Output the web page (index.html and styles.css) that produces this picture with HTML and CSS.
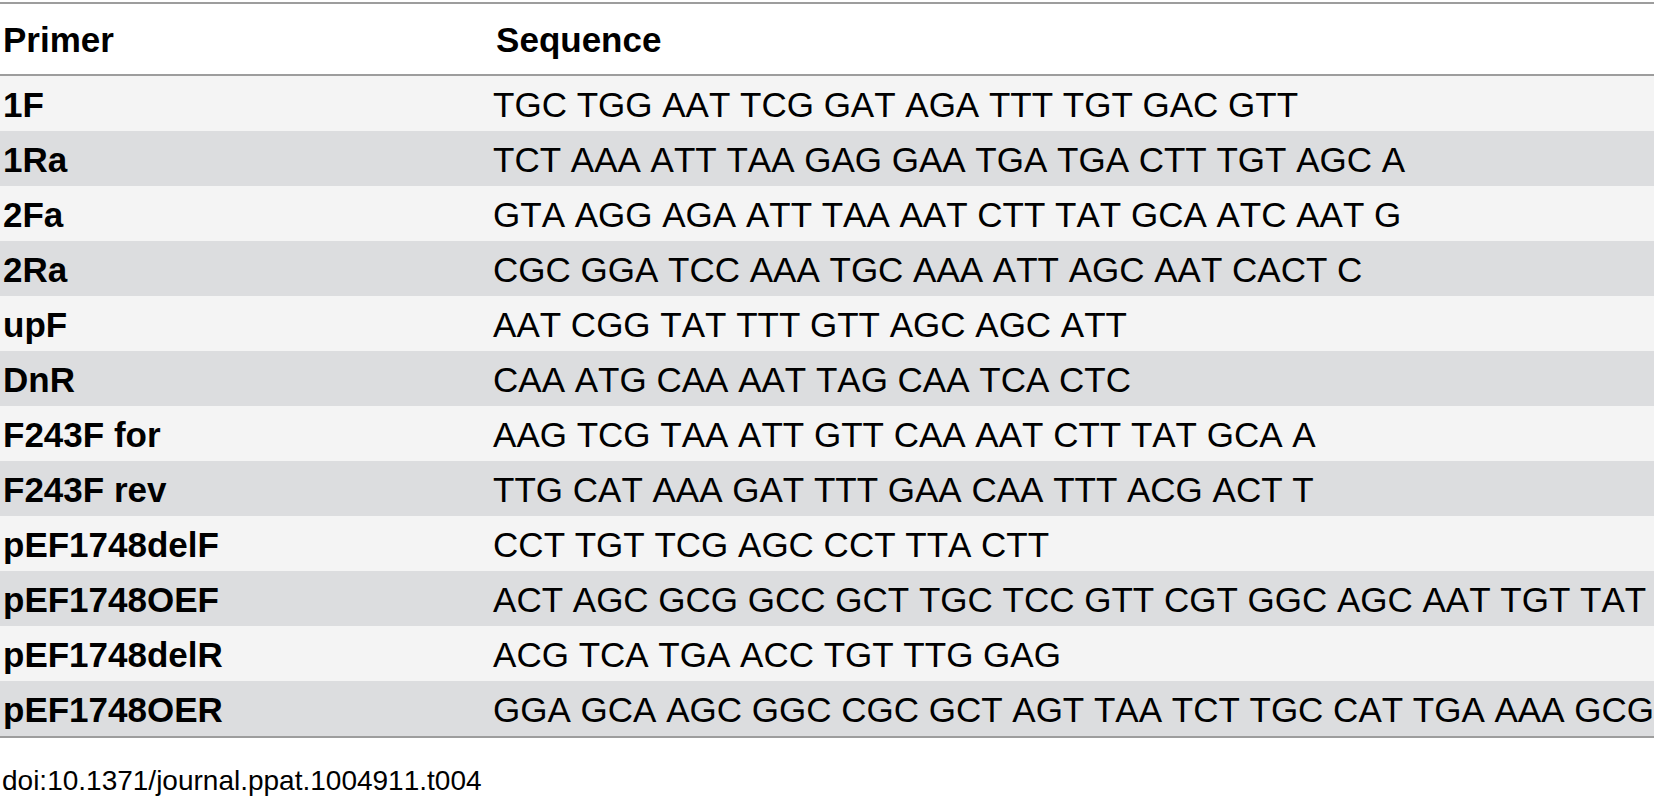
FILE: index.html
```html
<!DOCTYPE html>
<html>
<head>
<meta charset="utf-8">
<link rel="stylesheet" href="styles.css">
</head>
<body>
<div class="page">
<table class="primers">
<thead>
<tr><th class="c1">Primer</th><th class="c2">Sequence</th></tr>
</thead>
<tbody>
<tr><td class="name">1F</td><td>TGC TGG AAT TCG GAT AGA TTT TGT GAC GTT</td></tr>
<tr><td class="name">1Ra</td><td>TCT AAA ATT TAA GAG GAA TGA TGA CTT TGT AGC A</td></tr>
<tr><td class="name">2Fa</td><td>GTA AGG AGA ATT TAA AAT CTT TAT GCA ATC AAT G</td></tr>
<tr><td class="name">2Ra</td><td>CGC GGA TCC AAA TGC AAA ATT AGC AAT CACT C</td></tr>
<tr><td class="name">upF</td><td>AAT CGG TAT TTT GTT AGC AGC ATT</td></tr>
<tr><td class="name">DnR</td><td>CAA ATG CAA AAT TAG CAA TCA CTC</td></tr>
<tr><td class="name">F243F for</td><td>AAG TCG TAA ATT GTT CAA AAT CTT TAT GCA A</td></tr>
<tr><td class="name">F243F rev</td><td>TTG CAT AAA GAT TTT GAA CAA TTT ACG ACT T</td></tr>
<tr><td class="name">pEF1748delF</td><td>CCT TGT TCG AGC CCT TTA CTT</td></tr>
<tr><td class="name">pEF1748OEF</td><td>ACT AGC GCG GCC GCT TGC TCC GTT CGT GGC AGC AAT TGT TAT</td></tr>
<tr><td class="name">pEF1748delR</td><td>ACG TCA TGA ACC TGT TTG GAG</td></tr>
<tr><td class="name">pEF1748OER</td><td>GGA GCA AGC GGC CGC GCT AGT TAA TCT TGC CAT TGA AAA GCG</td></tr>
</tbody>
</table>
<p class="doi">doi:10.1371/journal.ppat.1004911.t004</p>
</div>
</body>
</html>
```
FILE: styles.css
```css
html, body {
  margin: 0;
  padding: 0;
  background: #ffffff;
}
.page {
  padding-top: 2px;
  font-family: "Liberation Sans", Arial, Helvetica, sans-serif;
  font-kerning: none;
  color: #000;
}
.primers {
  border-collapse: separate;
  border-spacing: 0;
  width: 1654px;
  border-top: 2px solid #9d9d9d;
  border-bottom: 2px solid #9d9d9d;
  font-size: 35px;
}
.primers th {
  text-align: left;
  font-weight: bold;
  height: 72px;
  padding: 16px 0 0 3px;
  box-sizing: border-box;
  line-height: 40px;
  vertical-align: top;
  background: #ffffff;
  border-bottom: 2px solid #9d9d9d;
}
.primers th.c1 {
  width: 494px;
}
.primers td {
  height: 55px;
  padding: 3px 0 0 0;
  box-sizing: border-box;
  line-height: 51px;
  vertical-align: top;
  white-space: nowrap;
}
.primers td.name {
  font-weight: bold;
  padding-left: 3px;
}
.primers tbody tr:nth-child(odd) {
  background: #f4f4f4;
}
.primers tbody tr:nth-child(even) {
  background: #dcdddf;
}
.doi {
  margin: 27px 0 0 2px;
  font-size: 28px;
  line-height: 32px;
}
```
